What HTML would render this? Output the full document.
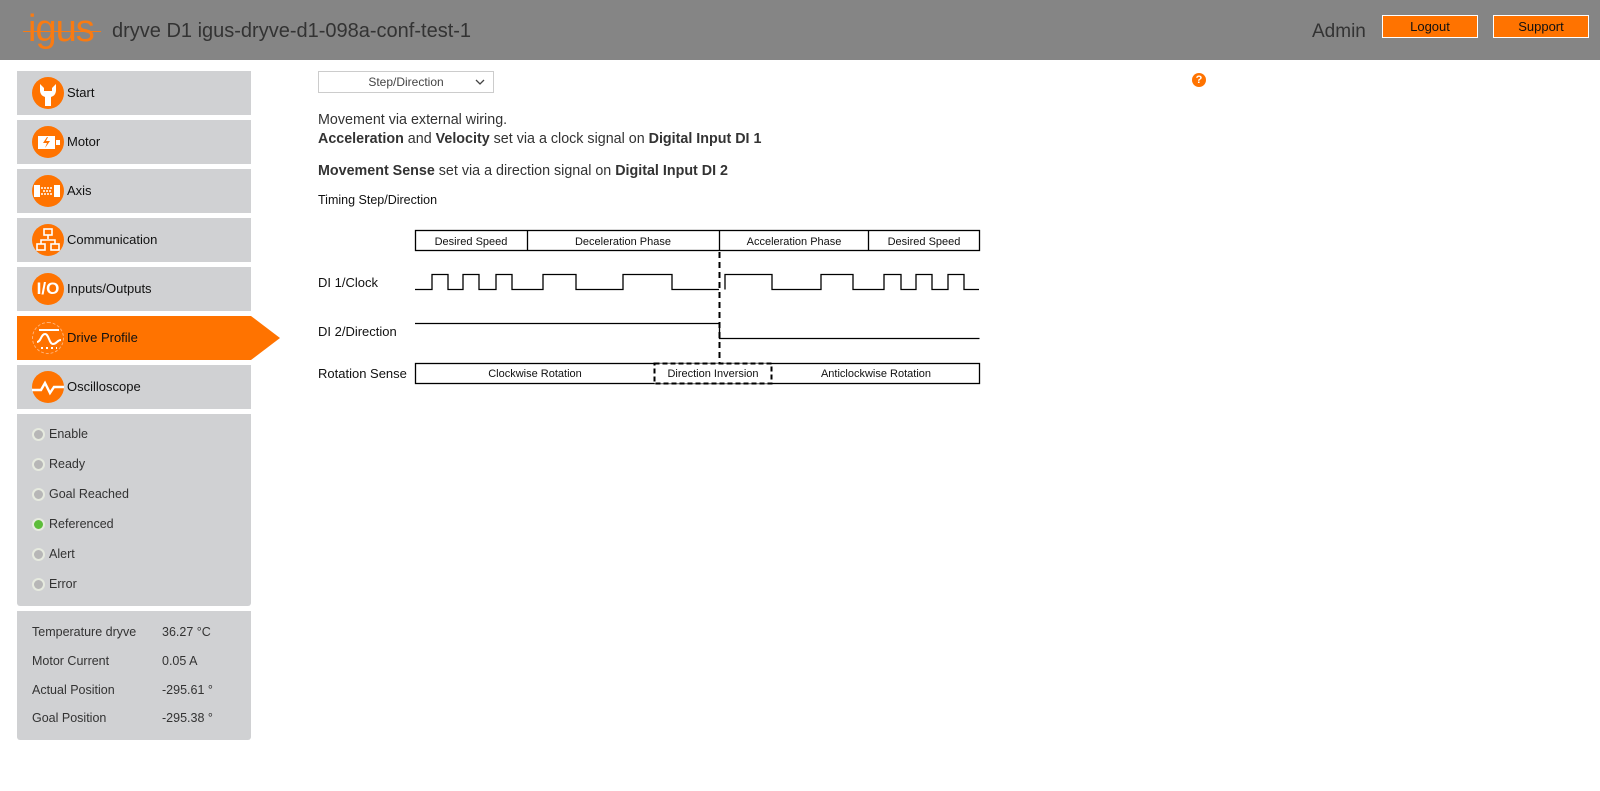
<!DOCTYPE html>
<html><head><meta charset="utf-8"><style>
*{box-sizing:border-box;margin:0;padding:0}
body{width:1600px;height:791px;background:#fff;font-family:"Liberation Sans",Arial,sans-serif;color:#333;position:relative;overflow:hidden}
.hdr{position:absolute;left:0;top:0;width:1600px;height:60px;background:#858585}
.logo{position:absolute;left:28px;top:9px;font-size:38px;color:#f97b12;font-weight:300;letter-spacing:-1px;font-family:"Liberation Sans",sans-serif;line-height:40px}
.logoline{position:absolute;left:23px;top:31px;width:78px;height:1px;background:#f97b12}
.title{position:absolute;left:112px;top:20px;font-size:20px;color:#333}
.admin{position:absolute;left:1312px;top:21px;font-size:19px;color:#333}
.btn{position:absolute;top:15px;width:96px;height:23px;background:#ff7300;border:1px solid #fff;color:#111;font-size:13px;text-align:center;line-height:21px}
.nav{position:absolute;left:17px;width:234px;height:44px;background:#d0d1d3;font-size:13px;color:#111}
.nav .ic{position:absolute;left:15px;top:6px;width:32px;height:32px;border-radius:50%;background:#ff7300}
.nav span{position:absolute;left:50px;top:14px}
.nav.act{background:#ff7300}
.panel{position:absolute;left:17px;width:234px;background:#d0d1d3;border-radius:0 0 3px 3px;font-size:12.5px;color:#333}
.st{position:absolute;left:15px}
.st i{position:absolute;left:0;top:0;width:13px;height:13px;border-radius:50%;background:#b7b7b7;border:2px solid #e6eadf}
.st span{position:absolute;left:17px;top:-1px;white-space:nowrap}
.dr{position:absolute;left:15px;white-space:nowrap}
.dr b{font-weight:normal;position:absolute;left:130px}
.txt{position:absolute;left:318px;font-size:14.3px;color:#333;white-space:nowrap}
.lbl{position:absolute;left:318px;font-size:13px;color:#111}
</style></head><body>
<div class="hdr">
<div class="logo">igus</div>
<div class="logoline"></div>
<div class="title">dryve D1 igus-dryve-d1-098a-conf-test-1</div>
<div class="admin">Admin</div>
<div class="btn" style="left:1382px">Logout</div>
<div class="btn" style="left:1493px">Support</div>
</div>

<div class="nav" style="top:71px"><div class="ic"><svg width="32" height="32"><path d="M8 7 v7 a7 7 0 0 0 5 6 v9 h6 v-9 a7 7 0 0 0 5 -6 v-7 l-4 4 v3 h-8 v-3z" fill="#fff"/></svg></div><span>Start</span></div>
<div class="nav" style="top:120px"><div class="ic"><svg width="32" height="32"><rect x="6" y="10" width="17" height="13" fill="#fff"/><rect x="24" y="14" width="4" height="5" fill="#fff"/><path d="M15 11 l-4 6 h4 l-2 5 l5-7 h-4 l2-4z" fill="#ff7300"/></svg></div><span>Motor</span></div>
<div class="nav" style="top:169px"><div class="ic"><svg width="32" height="32"><rect x="2" y="10" width="6" height="12" fill="#fff"/><rect x="22" y="10" width="6" height="12" fill="#fff"/><path d="M9 13h12M9 19h12M11 16h8" stroke="#fff" stroke-width="1.5" stroke-dasharray="2 1"/></svg></div><span>Axis</span></div>
<div class="nav" style="top:218px"><div class="ic"><svg width="32" height="32" fill="none" stroke="#fff" stroke-width="1.6"><rect x="12" y="5" width="8" height="6"/><rect x="5" y="20" width="8" height="6"/><rect x="19" y="20" width="8" height="6"/><path d="M16 11v4M9 20v-4h14v4"/></svg></div><span>Communication</span></div>
<div class="nav" style="top:267px"><div class="ic" style="color:#fff;font-size:17px;font-weight:bold;text-align:center;line-height:32px">I/O</div><span>Inputs/Outputs</span></div>
<div class="nav act" style="top:316px"><div class="ic" style="border:1px dashed #ffb47a"><svg width="32" height="32" fill="none" stroke="#fff" stroke-width="2"><path d="M6 7h20M4 19c4 0 4-8 8-8s4 10 8 10 4-4 8-4"/><path d="M8 25h16" stroke-dasharray="2 3"/></svg></div><span>Drive Profile</span></div>
<svg style="position:absolute;left:251px;top:316px" width="30" height="44"><path d="M0 0 L29 22 L0 44z" fill="#ff7300"/></svg>
<div class="nav" style="top:365px"><div class="ic"><svg width="32" height="32" fill="none" stroke="#fff" stroke-width="2.4"><path d="M0 19h9l4-7 5 10 4-6h10"/></svg></div><span>Oscilloscope</span></div>

<div class="panel" style="top:414px;height:192px">
<div class="st" style="top:14px"><i></i><span>Enable</span></div>
<div class="st" style="top:44px"><i></i><span>Ready</span></div>
<div class="st" style="top:74px"><i></i><span>Goal Reached</span></div>
<div class="st" style="top:104px"><i style="background:#5cbd3a"></i><span>Referenced</span></div>
<div class="st" style="top:134px"><i></i><span>Alert</span></div>
<div class="st" style="top:164px"><i></i><span>Error</span></div>
</div>
<div class="panel" style="top:611px;height:129px">
<div class="dr" style="top:14px">Temperature dryve<b>36.27 °C</b></div>
<div class="dr" style="top:43px">Motor Current<b>0.05 A</b></div>
<div class="dr" style="top:72px">Actual Position<b>-295.61 °</b></div>
<div class="dr" style="top:100px">Goal Position<b>-295.38 °</b></div>
</div>

<div style="position:absolute;left:318px;top:71px;width:176px;height:22px;border:1px solid #ccc;font-size:12px;color:#444;text-align:center;line-height:20px">Step/Direction<svg style="position:absolute;right:8px;top:7px" width="10" height="7"><path d="M1 1l4 4 4-4" stroke="#444" fill="none" stroke-width="1.3"/></svg></div>
<div style="position:absolute;left:1192px;top:73px;width:14px;height:14px;border-radius:50%;background:#ff7300;color:#fff;font-size:11px;font-weight:bold;text-align:center;line-height:14px">?</div>

<div class="txt" style="top:112px">Movement via external wiring.</div>
<div class="txt" style="top:131px"><b>Acceleration</b> and <b>Velocity</b> set via a clock signal on <b>Digital Input DI 1</b></div>
<div class="txt" style="top:163px"><b>Movement Sense</b> set via a direction signal on <b>Digital Input DI 2</b></div>
<div class="lbl" style="top:193px;font-size:12.5px">Timing Step/Direction</div>
<div class="lbl" style="top:275px">DI 1/Clock</div>
<div class="lbl" style="top:324px">DI 2/Direction</div>
<div class="lbl" style="top:366px">Rotation Sense</div>

<svg style="position:absolute;left:0;top:0" width="1600" height="791" font-family="Liberation Sans, Arial, sans-serif" font-size="11" text-anchor="middle">
<g fill="none" stroke="#000" stroke-width="1.3">
<rect x="415.5" y="230.5" width="564" height="20"/>
<path d="M527.5 230v21M719.5 230v21M868.5 230v21"/>
<path d="M415 289.5h17v-15h16v15h15v-15h16v15h17v-15h16v15h31v-15h33v15h47v-15h49v15h47 M725 289.5v-15h47v15h49v-15h32v15h31v-15h17v15h15v-15h16v15h16v-15h16v15h15"/>
<path d="M415 323.5h304.5v15h260"/>
<rect x="415.5" y="363.5" width="564" height="20"/>
<path d="M719.5 252v111" stroke-width="2" stroke-dasharray="6 4"/>
</g>
<rect x="654.5" y="363.5" width="117" height="20" fill="#fff" stroke="#000" stroke-width="2" stroke-dasharray="5 3"/>
<g fill="#111">
<text x="471" y="245">Desired Speed</text>
<text x="623" y="245">Deceleration Phase</text>
<text x="794" y="245">Acceleration Phase</text>
<text x="924" y="245">Desired Speed</text>
<text x="535" y="377">Clockwise Rotation</text>
<text x="713" y="377">Direction Inversion</text>
<text x="876" y="377">Anticlockwise Rotation</text>
</g>
</svg>
</body></html>
